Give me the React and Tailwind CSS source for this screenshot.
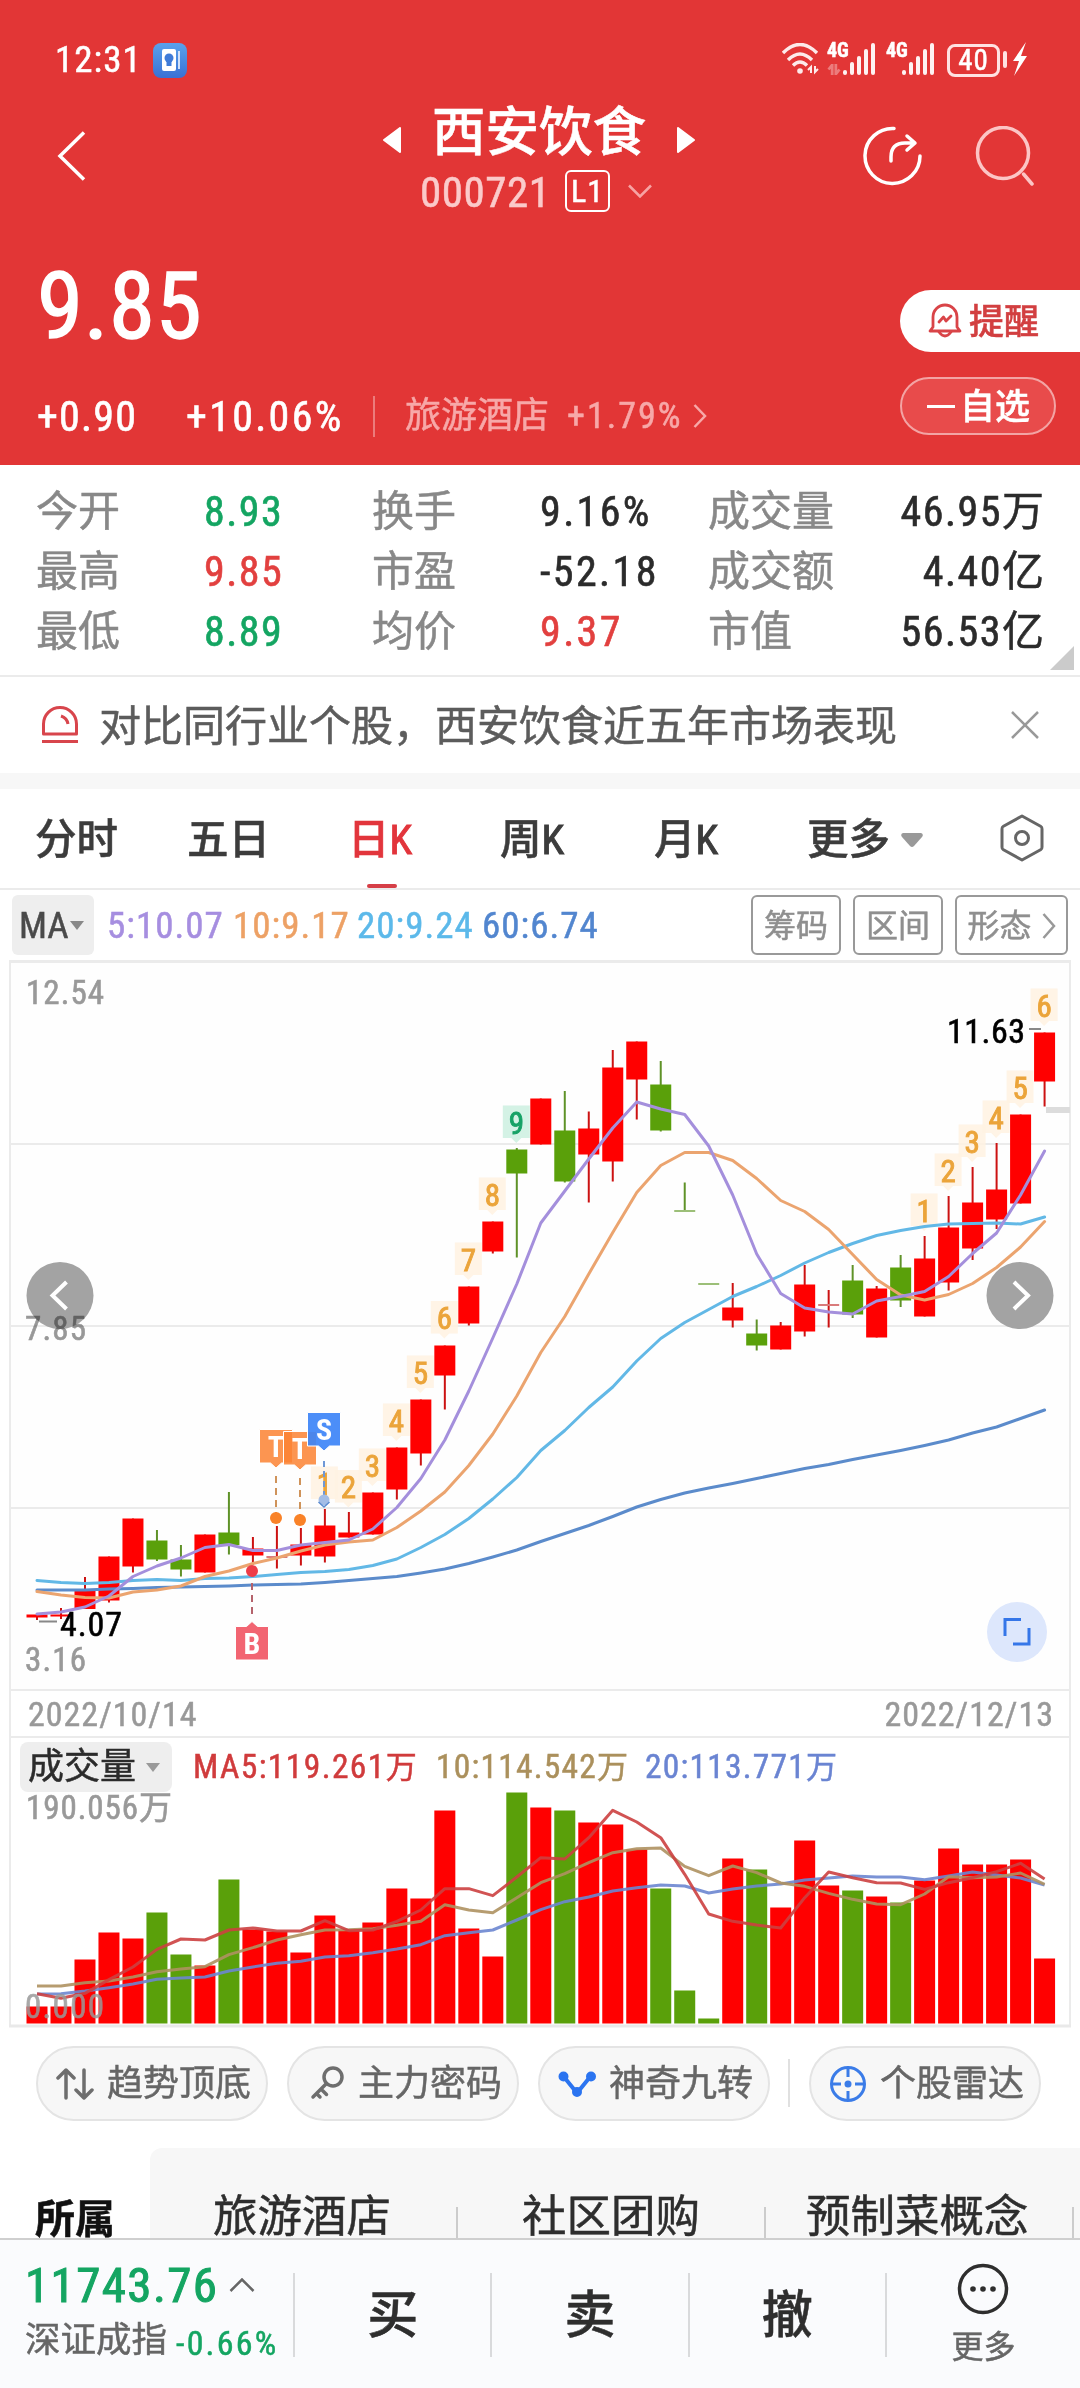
const RED = "#ff0000";
const GREEN = "#5aa00a";
const FIRST_X = 37;
const STEP = 23.99;

const cx = (i) => FIRST_X + i * STEP;

// [bodyTop, bodyBottom, wickTop, wickBottom, up, volumeTop]
const candles = [
  [1613.5, 1616.5, 1613, 1619, 1, 2005.5],
  [1613.5, 1615.5, 1607, 1618, 1, 2005.5],
  [1589.5, 1608, 1576, 1608, 1, 1958.5],
  [1555.5, 1599.5, 1555.5, 1601.5, 1, 1931.5],
  [1517.5, 1565.5, 1517.5, 1571.5, 1, 1937.5],
  [1539.5, 1558.5, 1529, 1560, 0, 1911.5],
  [1558.5, 1568.5, 1544, 1575.5, 0, 1953.5],
  [1533.5, 1571.5, 1533.5, 1571.5, 1, 1964.5],
  [1531.5, 1544, 1491, 1553.5, 0, 1878.5],
  [1547.5, 1554.5, 1536, 1564, 1, 1928.5],
  [1555.5, 1556.5, 1525, 1567.5, 1, 1930.5],
  [1543.5, 1554.5, 1527, 1564.5, 1, 1951.5],
  [1524.5, 1555.5, 1508, 1561.5, 1, 1914.5],
  [1531.5, 1536.5, 1511, 1536.5, 1, 1929.5],
  [1491.5, 1533.5, 1491.5, 1533.5, 1, 1921.5],
  [1446.5, 1488.5, 1446.5, 1498.5, 1, 1887.5],
  [1398.5, 1452.5, 1398.5, 1464.5, 1, 1897.5],
  [1344.5, 1374.5, 1344.5, 1408.5, 1, 1809.5],
  [1285.5, 1322.5, 1285.5, 1324.5, 1, 1927.5],
  [1220.5, 1250.5, 1220.5, 1252.5, 1, 1955.5],
  [1148.5, 1172.5, 1147, 1256.5, 0, 1791.5],
  [1097.5, 1143.5, 1097.5, 1143.5, 1, 1806.5],
  [1129.5, 1180.5, 1090, 1181.5, 0, 1809.5],
  [1127.5, 1153.5, 1110.5, 1201.5, 1, 1821.5],
  [1066.5, 1160.5, 1049, 1180.5, 1, 1823.5],
  [1040.5, 1078.5, 1040.5, 1118.5, 1, 1848.5],
  [1083.5, 1129.5, 1060, 1130.5, 0, 1887.5],
  [1209.5, 1210.5, 1181.5, 1210.5, 0, 1989.5],
  [1282.5, 1283.5, 1282.5, 1283.5, 0, 2017.5],
  [1306.5, 1319.5, 1282, 1326.5, 1, 1857.5],
  [1332.5, 1344.5, 1318.5, 1349.5, 0, 1868.5],
  [1324.5, 1348.5, 1321, 1348.5, 1, 1906.5],
  [1283.5, 1330.5, 1264, 1335.5, 1, 1839.5],
  [1303.5, 1304.5, 1289, 1326.5, 1, 1884.5],
  [1279.5, 1313.5, 1264, 1317, 0, 1889.5],
  [1287.5, 1336.5, 1285, 1336.5, 1, 1895.5],
  [1266.5, 1299.5, 1254, 1306, 0, 1901.5],
  [1257.5, 1315.5, 1235, 1315.5, 1, 1879.5],
  [1226.5, 1281.5, 1195, 1289.5, 1, 1847.5],
  [1201.5, 1247.5, 1166, 1259, 1, 1863.5],
  [1188.5, 1218.5, 1142, 1228, 1, 1863.5],
  [1113.5, 1202.5, 1113.5, 1202.5, 1, 1858.5],
  [1031.5, 1080.5, 1031.5, 1105.5, 1, 1957.5],
];

const priceLines = [
  {
    color: "#5b8bcb",
    ys: [1589, 1589, 1589, 1588, 1587.5, 1586.5, 1586, 1585.5, 1585, 1584, 1583.5, 1583, 1581.5, 1579.5, 1577.5, 1575.5, 1572, 1568, 1562.5, 1556, 1549, 1540.5, 1532.5, 1524.5, 1515.5, 1506, 1498.5, 1492, 1487, 1482.5, 1477.5, 1472.5, 1467.5, 1463.5, 1458.5, 1454, 1449.5, 1444.5, 1439, 1432, 1426, 1417.5, 1409],
  },
  {
    color: "#62b8e6",
    ys: [1579.5, 1581.5, 1582.5, 1581.5, 1579.5, 1578.5, 1579.5, 1577.5, 1577, 1575.5, 1573.5, 1571.5, 1570.5, 1568.5, 1564.5, 1558, 1546.5, 1533.5, 1517.5, 1498, 1476.5, 1449.5, 1429.5, 1406.5, 1386, 1360, 1337.5, 1321.5, 1308.5, 1295.5, 1285.5, 1274.5, 1262, 1251.5, 1242.5, 1234.5, 1229.5, 1225.5, 1223, 1222.5, 1222, 1223, 1216],
  },
  {
    color: "#eba46f",
    ys: [1590.5, 1594, 1596.5, 1597, 1591, 1589, 1585, 1575.5, 1570, 1562.5, 1557, 1550, 1544, 1541, 1539, 1526.5, 1510, 1491, 1464.5, 1433, 1395, 1351.5, 1315.5, 1273, 1231.5, 1191.5, 1164.5, 1151.5, 1151.5, 1159.5, 1177.5, 1199.5, 1210.5, 1228.5, 1253.5, 1278.5, 1294, 1299, 1293.5, 1282.5, 1266.5, 1246, 1220.5],
  },
  {
    color: "#a48fdc",
    ys: [1613, 1611, 1606, 1595, 1575.5, 1565, 1557, 1546.5, 1543.5, 1549.5, 1549.5, 1544, 1541.5, 1539, 1528, 1506.5, 1477.5, 1439, 1390, 1337, 1283, 1222, 1190, 1158, 1127, 1101, 1108, 1113.5, 1145, 1194, 1253, 1292.5, 1307, 1311, 1313, 1300, 1295.5, 1290.5, 1275.5, 1252.5, 1232, 1194, 1150],
  },
];

// offsets below the top of the volume pane
const volumeLines = [
  {
    color: "#6c86d0",
    ys: [759, 758, 750, 740, 729, 715, 711, 708, 690, 678, 667, 661, 648, 644, 635, 624, 611, 584, 575, 567, 537, 506, 482, 468, 450, 440, 432, 435, 456, 444, 435, 429, 417, 411, 405, 408, 408, 416, 405, 393, 402, 411, 432],
  },
  {
    color: "#ae9160",
    ys: [735, 735, 725, 720, 708, 692, 684, 677, 641, 620, 597, 581, 567, 566, 563, 553, 541, 491, 507, 515, 470, 425, 398, 365, 335, 323, 321, 376, 404, 375, 395, 426, 436, 457, 475, 489, 491, 459, 407, 410, 408, 396, 430],
  },
  {
    color: "#cc4040",
    ys: [758, 772, 757, 716, 678, 625, 594, 597, 567, 561, 570, 570, 539, 569, 567, 541, 507, 443, 443, 464, 408, 350, 354, 290, 208, 243, 290, 400, 519, 541, 552, 561, 470, 393, 410, 425, 426, 445, 425, 410, 392, 367, 414],
  },
].map((l) => ({ ...l, ys: l.ys.map((v) => 1740 + v / 3) }));

// [index, top, label]
const badges = [
  [12, 1465.5, "1"],
  [13, 1469, "2"],
  [14, 1447.5, "3"],
  [15, 1402.5, "4"],
  [16, 1354.5, "5"],
  [17, 1300, "6"],
  [18, 1241.5, "7"],
  [19, 1176.5, "8"],
  [20, 1104.5, "9"],
  [37, 1192.5, "1"],
  [38, 1152.5, "2"],
  [39, 1123.5, "3"],
  [40, 1099.5, "4"],
  [41, 1069.5, "5"],
  [42, 987.5, "6"],
];

const points = (ys) => ys.map((y, i) => `${cx(i)},${y}`).join(" ");

const Label = ({ x, y, w, children, fill = "#999", size = 33 }) => (
  <text x={x} y={y} fill={fill} stroke={fill} strokeWidth="0.6" fontSize={size} textLength={w}>
    {children}
  </text>
);

const Marker = ({ x, y, letter, color, up, opacity = 0.85 }) => (
  <g>
    <path
      d={
        up
          ? `M${x - 16.5} ${y}h11l5.5 -5 5.5 5h11v33.5h-33z`
          : `M${x - 16.5} ${y}h33v33.5h-11l-5.5 5 -5.5 -5h-11z`
      }
      fill={color}
      fillOpacity={opacity}
      stroke="#fff"
      strokeWidth="1"
    />
    <text x={x} y={y + 27} fill="#fff" fontSize="30" fontWeight="700" textAnchor="middle">
      {letter}
    </text>
  </g>
);

const Badge = ({ index, top, label }) => {
  const x = cx(index) - 0.5;
  const done = label === "9";
  const color = done ? "#17a266" : "#eba43a";
  return (
    <g>
      <path
        d={`M${x - 13.5} ${top}h27v32.5h-8.5l-5 5 -5 -5h-8.5z`}
        fill={done ? "#cdf0e0" : "#fff2e2"}
        fillOpacity="0.85"
      />
      <text x={x} y={top + 28} fill={color} stroke={color} strokeWidth="0.9" fontSize="31" textAnchor="middle">
        {label}
      </text>
    </g>
  );
};

const PriceChart = () => (
  <svg viewBox="0 959 1080 729" className="block h-[729px] w-[1080px]">
    <rect x="10" y="961" width="1060" height="740" fill="#fefefe" stroke="#ebebeb" strokeWidth="2" />
    <path d="M9 960.5H1071" stroke="#ebebeb" strokeWidth="3" />
    <path d="M10 1143H1070M10 1325H1070M10 1507H1070" stroke="#ebebeb" strokeWidth="2" />

    {candles.map(([top, bottom, high, low, up], i) => {
      const flat = bottom - top < 2;
      return (
        <g key={i}>
          <path d={`M${cx(i)} ${high}V${low}`} stroke={up ? "#cc1212" : "#5f9228"} strokeWidth="2" />
          <rect
            x={cx(i) - 10.5}
            y={top - (flat ? 0.5 : 0)}
            width="21"
            height={flat ? 2 : bottom - top}
            fill={flat ? (up ? "#d97b7b" : "#9cbf78") : up ? RED : GREEN}
          />
        </g>
      );
    })}
    <rect x="1046" y="1106" width="24" height="6" fill="#dcdcdc" />

    {badges.map(([index, top, label]) => (
      <Badge key={index} index={index} top={top} label={label} />
    ))}
    {priceLines.map((l) => (
      <polyline key={l.color} points={points(l.ys)} fill="none" stroke={l.color} strokeWidth="3" strokeLinejoin="round" strokeLinecap="round" />
    ))}

    <path d="M276 1475V1512M300 1477V1514" stroke="#cf935a" strokeWidth="2" strokeDasharray="7 5" />
    <path d="M324 1460V1496" stroke="#6f98d6" strokeWidth="2" strokeDasharray="6 4" />
    <path d="M252 1582V1618" stroke="#b5636c" strokeWidth="2" strokeDasharray="7 5" />
    <circle cx="276" cy="1517" r="6" fill="#f98228" />
    <circle cx="300" cy="1519" r="6" fill="#f98228" />
    <circle cx="252" cy="1570" r="6" fill="#ee3c48" />
    <circle cx="324" cy="1499" r="5.5" fill="#a3bde6" />
    <path d="M318.5 1501l5.5 5 5.5 -5" fill="none" stroke="#5c8cd0" strokeWidth="1.5" />
    <Marker x={276} y={1428.5} letter="T" color="#fb8232" />
    <Marker x={300} y={1430.5} letter="T" color="#fb8232" />
    <Marker x={324} y={1411.5} letter="S" color="#3d84f7" opacity={0.92} />
    <Marker x={252} y={1625.5} letter="B" color="#f04a59" up />

    <path d="M39 1620.5H57M1029 1028H1041" stroke="#888" strokeWidth="2" />
    <Label x={60} y={1635} w={62} fill="#000" size={34}>4.07</Label>
    <Label x={947} y={1041.5} w={78} fill="#000" size={34}>11.63</Label>

    <circle cx="60" cy="1294.5" r="33.5" fill="#a3a3a3" />
    <circle cx="1020" cy="1294.5" r="33.5" fill="#a3a3a3" />
    <path d="M66.5 1281L52.5 1294.5L66.5 1308M1014 1281L1028 1294.5L1014 1308" fill="none" stroke="#fff" strokeWidth="4" />

    <Label x={26} y={1003} w={78}>12.54</Label>
    <g className="mix-blend-multiply">
      <Label x={25} y={1339} w={61} fill="#999">7.85</Label>
    </g>
    <Label x={25} y={1670} w={61}>3.16</Label>

    <circle cx="1017" cy="1631" r="30" fill="#dde7fc" />
    <path d="M1021 1618.5H1005V1635M1029 1627V1643H1013" fill="none" stroke="#3576e8" strokeWidth="3" />
  </svg>
);

const VolumeChart = () => (
  <svg viewBox="0 1791 1080 236" className="block h-[236px] w-[1080px] overflow-visible">
    <path d="M10 1791V2024M1070 1791V2024" stroke="#ebebeb" strokeWidth="2" />
    <path d="M9 2025H1071" stroke="#e9e9e9" strokeWidth="3" />
    {candles.map(([, , , , up, top], i) => (
      <rect key={i} x={cx(i) - 10.5} y={top} width="21" height={2022.5 - top} fill={up ? RED : GREEN} />
    ))}
    {volumeLines.map((l) => (
      <polyline key={l.color} points={points(l.ys)} fill="none" stroke={l.color} strokeOpacity="0.9" strokeWidth="3" strokeLinejoin="round" />
    ))}
    <Label x={26} y={1818} w={146}>190.056万</Label>
    <g opacity="0.85">
      <Label x={25} y={2017} w={79}>0.000</Label>
    </g>
  </svg>
);

const Signal = () => (
  <div className="flex h-[32px] items-end gap-[3px]">
    <i className="h-[5px] w-1 rounded-full bg-red-50" />
    <i className="h-[13px] w-1 rounded-full bg-red-50" />
    <i className="h-[19px] w-1 rounded-full bg-red-50" />
    <i className="h-[26px] w-1 rounded-full bg-red-50" />
    <i className="h-[32px] w-1 rounded-full bg-red-50" />
  </div>
);

const StatusBar = () => (
  <div className="flex h-[118px] items-center">
    <span className="mt-[2px] ml-[55px] w-[98px] text-[37px] tracking-[1px]">12:31</span>
    <div className="mt-[2px] flex h-[35px] w-[34px] items-center justify-center rounded-lg bg-gradient-to-b from-[#5aa2ec] to-[#3a70d4]">
      <svg viewBox="0 0 24 24" className="h-6 w-6">
        <rect x="4" y="1" width="14" height="22" rx="2" fill="#fff" />
        <path d="M21 3v18" stroke="#cfe0fa" strokeWidth="2" />
        <circle cx="11" cy="10" r="4.5" fill="#3f7bd8" />
        <path d="M8.5 13h5v5h-5z" fill="#3f7bd8" />
      </svg>
    </div>
    <svg viewBox="0 0 38 32" className="ml-[595px] h-[32px] w-[38px]" fill="none" stroke="#fdeaea" strokeWidth="3.4">
      <path d="M1 10Q18 -7 35 10M6 17Q18 5 30 17M11 22.5Q18 15.500 25 22.5" />
      <circle cx="18" cy="28" r="2.800" fill="#fdeaea" stroke="none" />
      <path d="M29 30v-6l-3 3M33 23v6l3 -3" strokeWidth="2" />
    </svg>
    <div className="ml-[7px] flex h-[32px]">
      <div className="flex flex-col justify-between">
        <span className="w-[18px] text-[20px] leading-[15px] font-bold">4G</span>
        <svg viewBox="0 0 14 12" className="h-[11px] w-[14px] opacity-35" fill="none" stroke="#fff" strokeWidth="3">
          <path d="M5 12V1L1 6M9 0v11l4 -5" />
        </svg>
      </div>
      <div className="-ml-0.5"><Signal /></div>
    </div>
    <div className="ml-[11px] flex h-[32px]">
      <span className="w-[16px] text-[20px] leading-[15px] font-bold">4G</span>
      <Signal />
    </div>
    <div className="mt-[2px] ml-[13px] flex h-[33px] w-[53px] items-center justify-center rounded-[8px] border-[3px] border-red-100 text-[29px] leading-none tracking-[1px]">
      40
    </div>
    <i className="ml-[3px] h-[17px] w-1 rounded-full bg-red-100" />
    <svg viewBox="0 0 14 34" className="ml-[6px] h-[34px] w-[14px]" fill="#fff">
      <path d="M13 0L0 19h6L1 34L14 14H8z" />
    </svg>
  </div>
);

const TitleBar = () => (
  <div className="flex h-[142px] items-start">
    <svg viewBox="0 0 30 50" className="mt-[13px] ml-[57px] h-[50px] w-[30px]" fill="none" stroke="#fff" strokeWidth="3.5">
      <path d="M27 1.5L3 25L27 48.5" />
    </svg>
    <div className="ml-[296px] flex w-[312px] flex-col items-center">
      <div className="-mt-[12px] flex h-[54px] w-full items-center justify-between">
        <svg viewBox="0 0 18 26" className="mt-[14px] h-[26px] w-[18px]"><path d="M17 1v24L1 13z" fill="#fff" stroke="#fff" strokeLinejoin="round" strokeWidth="2" /></svg>
        <span className="text-[53.5px] leading-none font-medium">西安饮食</span>
        <svg viewBox="0 0 18 26" className="mt-[14px] h-[26px] w-[18px]"><path d="M1 1v24L17 13z" fill="#fff" stroke="#fff" strokeLinejoin="round" strokeWidth="2" /></svg>
      </div>
      <div className="mt-[10px] flex h-[42px] w-full items-center pl-[37px]">
        <span className="mt-[3px] w-[145px] text-[43px] leading-none tracking-[0.5px] text-[#fbcaca]">000721</span>
        <span className="flex h-[42px] w-[45px] items-center justify-center rounded-md border-2 border-white text-[32px] leading-none tracking-[1px]">L1</span>
        <svg viewBox="0 0 24 14" className="ml-[18px] h-[14px] w-6" fill="none" stroke="#f7a3a3" strokeWidth="2.5">
          <path d="M1 1.5L12 12.5L23 1.5" />
        </svg>
      </div>
    </div>
    <svg viewBox="0 0 60 60" className="ml-[168px] mt-[8px] h-[60px] w-[60px]" fill="none" stroke="#fff" strokeWidth="3.5" strokeLinecap="round" strokeLinejoin="round">
      <path d="M31 2.5A27.5 27.5 0 1 0 57 30" />
      <path d="M28 35V31Q28 17 42 17H51M44 10L52 17L44 24" />
    </svg>
    <svg viewBox="0 0 60 60" className="ml-[52px] mt-[8px] h-[60px] w-[60px]" fill="none" stroke="#fcc5c5" strokeWidth="3.5" strokeLinecap="round">
      <circle cx="28" cy="27" r="25.5" />
      <path d="M48.5 48L57 58" />
    </svg>
  </div>
);

const Quote = () => (
  <div className="flex h-[205px] justify-between">
    <div className="flex flex-col">
      <span className="ml-[37px] text-[93px] leading-none tracking-[0.8px] [-webkit-text-stroke:1.5px_white]">9.85</span>
      <div className="mt-[42px] flex h-[42px] items-center">
        <span className="mt-[2px] w-[149px] ml-[37px] text-[42px] leading-none tracking-[1.2px] [-webkit-text-stroke:0.6px_white]">+0.90</span>
        <span className="mt-[2px] w-[187px] text-[42px] leading-none tracking-[2.3px] [-webkit-text-stroke:0.6px_white]">+10.06%</span>
        <i className="h-[41px] w-[2px] bg-white/35" />
        <span className="ml-[30px] w-[162px] text-[36px] leading-none text-[#f7a8a8]">旅游酒店</span>
        <span className="w-[126px] text-[36px] leading-none tracking-[2px] text-[#f7a8a8]">+1.79%</span>
        <svg viewBox="0 0 14 24" className="h-6 w-[14px]" fill="none" stroke="#f7a8a8" strokeWidth="2.5">
          <path d="M1.5 1L12 12L1.5 23" />
        </svg>
      </div>
    </div>
    <div className="mt-[30px] flex flex-col items-end">
      <button className="flex h-[62px] w-[180px] items-center rounded-l-full bg-white pl-[28px] text-[35px] leading-none text-[#d23f40]">
        <svg viewBox="0 0 34 36" className="mr-[7px] h-[36px] w-[34px]" fill="none" stroke="#d94448" strokeWidth="2.8" strokeLinejoin="round" strokeLinecap="round">
          <path d="M5 24V14A12 12 0 0 1 29 14V24L32 28H2z" />
          <path d="M11 29Q17 37 23 29M11 19L15.5 14L18 18L23 13" />
        </svg>
        <span className="mt-[3px] font-medium">提醒</span>
      </button>
      <button className="mt-[25px] mr-6 flex h-[58px] w-[156px] items-center rounded-full border-2 border-[#f3a4a4] bg-[#e84b4b] pl-[25px] text-[35px] leading-none">
        <i className="mr-[5px] h-[3px] w-[28px] bg-white" />
        <span className="mt-[2px] font-medium">自选</span>
      </button>
    </div>
  </div>
);

const stats = [
  ["今开", "8.93", "text-[#14a562]", "换手", "9.16%", "text-[#2b2b2b]", "成交量", "46.95万"],
  ["最高", "9.85", "text-[#e2403f]", "市盈", "-52.18", "text-[#2b2b2b]", "成交额", "4.40亿"],
  ["最低", "8.89", "text-[#14a562]", "均价", "9.37", "text-[#e2403f]", "市值", "56.53亿"],
];

const Stats = () => (
  <div className="relative h-[212px] border-b-2 border-[#ebebeb] pt-[17px] text-[42px] leading-none text-[#888]">
    {stats.map(([a, av, ac, b, bv, bc, c, cv]) => (
      <div key={a} className="flex h-[60px] items-center pr-[36px] pl-[36px]">
        <span className="w-[168px]">{a}</span>
        <span className={`w-[168px] tracking-[1.5px] [-webkit-text-stroke:0.6px] ${ac}`}>{av}</span>
        <span className="w-[168px]">{b}</span>
        <span className={`w-[168px] tracking-[2.4px] [-webkit-text-stroke:0.6px] ${bc}`}>{bv}</span>
        <span>{c}</span>
        <span className="ml-auto flex items-center text-[#2b2b2b]">
          <span className="tracking-[1.5px] [-webkit-text-stroke:0.6px]">{cv.slice(0, -1)}</span>
          <span>{cv.slice(-1)}</span>
        </span>
      </div>
    ))}
    <svg viewBox="0 0 24 24" className="absolute right-[6px] bottom-[5px] h-6 w-6"><path d="M24 0V24H0z" fill="#cbcbcb" /></svg>
  </div>
);

const Notice = () => (
  <div className="flex h-[112px] items-center border-b-[16px] border-[#f7f7f7] pl-[41px] text-[42px] leading-none text-[#5c5c5c]">
    <svg viewBox="0 0 38 38" className="h-[38px] w-[38px]" fill="none" stroke="#d8454c" strokeWidth="3">
      <path d="M2.5 28V18A16.5 16.5 0 0 1 35.5 18V28z" strokeLinejoin="round" />
      <path d="M1 35.5H37M20 10Q26 12 27 18" />
    </svg>
    <span className="mt-[4px] ml-[20px]">对比同行业个股，西安饮食近五年市场表现</span>
    <svg viewBox="0 0 28 28" className="ml-[114px] h-7 w-7" stroke="#999" strokeWidth="2.5">
      <path d="M1 1L27 27M27 1L1 27" />
    </svg>
  </div>
);

const Tabs = () => (
  <div className="flex h-[101px] items-center border-b-2 border-[#ebebeb] pt-[2px] text-[41.5px] leading-none text-[#3c3c3c]">
    <span className="ml-[35px] w-[152px] font-medium">分时</span>
    <span className="w-[161px] font-medium">五日</span>
    <span className="relative flex h-full w-[68px] items-center text-[#e2353c]">
      <span className="font-medium">日</span><span className="[-webkit-text-stroke:1px]">K</span>
      <i className="absolute bottom-0 left-[19px] h-1 w-[30px] rounded-sm bg-[#d63f47]" />
    </span>
    <span className="ml-[84px] flex w-[154px]"><span className="font-medium">周</span><span className="[-webkit-text-stroke:1px]">K</span></span>
    <span className="flex w-[153px]"><span className="font-medium">月</span><span className="[-webkit-text-stroke:1px]">K</span></span>
    <span className="w-[94px] font-medium">更多</span>
    <svg viewBox="0 0 22 14" className="h-[14px] w-[22px]"><path d="M2 0H20Q23 1 21 4L13 13Q11 15 9 13L1 4Q-1 1 2 0z" fill="#999" /></svg>
    <svg viewBox="0 0 46 48" className="-mt-[4px] ml-[76px] h-[48px] w-[46px]" fill="none" stroke="#666" strokeWidth="3">
      <path d="M23 2L42 12.5Q43 13 43 15V33Q43 35 42 35.5L23 46L4 35.5Q3 35 3 33V15Q3 13 4 12.5z" strokeLinejoin="round" />
      <circle cx="23" cy="24" r="6.5" />
    </svg>
  </div>
);

const MaRow = () => (
  <div className="flex h-[70px] items-center pl-[12px] text-[37px] leading-none tracking-[1px]">
    <span className="flex h-[60px] w-[82px] items-center rounded-md bg-[#eee] pl-[7px] tracking-normal text-[#4a4a4a]">
      MA
      <svg viewBox="0 0 14 9" className="ml-[1px] h-[9px] w-[14px]"><path d="M0 0H14L7 9z" fill="#888" /></svg>
    </span>
    <span className="ml-[13px] w-[126px] text-[#a68ee0]">5:10.07</span>
    <span className="w-[124px] text-[#eda165]">10:9.17</span>
    <span className="w-[125px] text-[#5cb9ea]">20:9.24</span>
    <span className="w-[269px] text-[#5286cf]">60:6.74</span>
    <div className="flex gap-[12px] text-[32px] tracking-normal text-[#8f8f8f]">
      <span className="flex h-[60px] w-[90px] items-center justify-center rounded-md border-2 border-[#999] pt-[2px]">筹码</span>
      <span className="flex h-[60px] w-[90px] items-center justify-center rounded-md border-2 border-[#999] pt-[2px]">区间</span>
      <span className="flex h-[60px] w-[113px] items-center justify-center gap-[10px] rounded-md border-2 border-[#999] pt-[2px]">
        形态
        <svg viewBox="0 0 14 26" className="h-[26px] w-[14px]" fill="none" stroke="#999" strokeWidth="2.5">
          <path d="M1.5 1L12 13L1.5 25" />
        </svg>
      </span>
    </div>
  </div>
);

const DateRow = () => (
  <div className="mx-[9px] flex h-[49px] items-center justify-between border-2 border-[#ebebeb] pr-[15px] pl-[17px] text-[34px] leading-none tracking-[1px] text-[#999]">
    <span>2022/10/14</span>
    <span>2022/12/13</span>
  </div>
);

const VolumeHeader = () => (
  <div className="mx-[9px] flex h-[54px] items-center border-x-2 border-[#ebebeb] pt-1 pl-[9px] text-[33.5px] leading-none tracking-[1.4px]">
    <span className="flex h-[50px] w-[152px] items-center rounded-lg bg-[#eee] pl-[8px] text-[36px] tracking-normal text-[#2b2b2b]">
      成交量
      <svg viewBox="0 0 14 9" className="ml-[10px] h-[9px] w-[14px]"><path d="M0 0H14L7 9z" fill="#999" /></svg>
    </span>
    <span className="ml-[21px] w-[243px] whitespace-nowrap text-[#d03b3c]">MA5:119.261<span className="text-[31px] tracking-normal">万</span></span>
    <span className="w-[209px] whitespace-nowrap tracking-[1.2px] text-[#ab905c]">10:114.542<span className="text-[31px] tracking-normal">万</span></span>
    <span className="whitespace-nowrap tracking-[1.2px] text-[#6a84d2]">20:113.771<span className="text-[31px] tracking-normal">万</span></span>
  </div>
);

const Chip = ({ icon, children }) => (
  <span className="flex h-[75px] w-[232px] items-center rounded-full border-2 border-[#e4e4e4] bg-[#f7f7f7] pl-[18px] text-[36px] leading-none text-[#666]">
    <span className="mr-[13px] shrink-0">{icon}</span>
    <span className="whitespace-nowrap">{children}</span>
  </span>
);

const Chips = () => (
  <div className="flex h-[120px] items-start pt-[18px] pl-[36px]">
    <Chip
      icon={
        <svg viewBox="0 0 38 38" className="h-[38px] w-[38px]" fill="none" stroke="#6e6e6e" strokeWidth="3.5" strokeLinecap="round" strokeLinejoin="round">
          <path d="M10 33V5M2 13L10 5L18 13M28 5V33M20 25L28 33L36 25" />
        </svg>
      }
    >
      趋势顶底
    </Chip>
    <i className="w-[19px]" />
    <Chip
      icon={
        <svg viewBox="0 0 38 38" className="h-[38px] w-[38px]" fill="none" stroke="#6e6e6e" strokeWidth="3.5" strokeLinecap="round">
          <circle cx="26" cy="12" r="9" />
          <path d="M19.5 18.5L6 32M9.5 28.5L13 32M14 24L19.5 29.5" />
        </svg>
      }
    >
      主力密码
    </Chip>
    <i className="w-[19px]" />
    <Chip
      icon={
        <svg viewBox="0 0 38 38" className="h-[38px] w-[38px]" fill="#2b74f0" stroke="#2b74f0" strokeWidth="4">
          <path d="M6 12L19 28L32 12" fill="none" />
          <circle cx="5.5" cy="11.5" r="3" />
          <circle cx="19" cy="27" r="3" />
          <circle cx="33" cy="11.5" r="3" />
        </svg>
      }
    >
      神奇九转
    </Chip>
    <i className="mt-[13px] mr-[19px] ml-[18px] h-[48px] w-[2px] bg-[#e0e0e0]" />
    <Chip
      icon={
        <svg viewBox="0 0 38 38" className="h-[38px] w-[38px]" fill="none" stroke="#3b7ce8" strokeWidth="3">
          <circle cx="19" cy="19" r="16.5" />
          <circle cx="19" cy="19" r="3.5" fill="#3b7ce8" stroke="none" />
          <path d="M19 2V12M19 26V36M2 19H12M26 19H36" />
        </svg>
      }
    >
      个股雷达
    </Chip>
  </div>
);

const Sectors = () => (
  <div className="flex h-[90px] overflow-hidden">
    <span className="mt-[52px] w-[150px] pl-[35px] text-[40px] leading-none font-bold text-[#111]">所属</span>
    <div className="flex flex-1 items-start rounded-tl-xl bg-[#f7f7f7] pt-[47px] text-[44.5px] leading-none text-[#2e2e2e]">
      <span className="ml-[63px] w-[243px] whitespace-nowrap">旅游酒店</span>
      <i className="mt-3 h-12 w-[2px] bg-[#ccc]" />
      <span className="ml-[64px] w-[242px] whitespace-nowrap">社区团购</span>
      <i className="mt-3 h-12 w-[2px] bg-[#ccc]" />
      <span className="ml-[40px] w-[266px] whitespace-nowrap">预制菜概念</span>
      <i className="mt-3 h-12 w-[2px] bg-[#ccc]" />
    </div>
  </div>
);

const Divider = () => <i className="h-[84px] w-[2px] bg-[#d9dadc]" />;

const BottomBar = () => (
  <div className="flex h-[151px] items-center border-t-2 border-[#cfcfcf] bg-[#fafbfd] leading-none text-[#2e2e2e]">
    <div className="-mt-[10px] flex w-[293px] flex-col pl-[25px]">
      <div className="flex h-[50px] items-center text-[#14a562]">
        <span className="w-[204px] text-[49px] tracking-[1.4px] [-webkit-text-stroke:1px]">11743.76</span>
        <svg viewBox="0 0 26 14" className="h-[14px] w-[26px]" fill="none" stroke="#666" strokeWidth="2.5">
          <path d="M1.5 13L13 1.5L24.5 13" />
        </svg>
      </div>
      <div className="mt-[13px] flex h-[36px] items-center">
        <span className="w-[151px] text-[35.5px] whitespace-nowrap text-[#666]">深证成指</span>
        <span className="mt-1 text-[34px] tracking-[2.2px] text-[#14a562]">-0.66%</span>
      </div>
    </div>
    <Divider />
    <span className="mt-[2px] flex-1 text-center text-[51px] font-medium">买</span>
    <Divider />
    <span className="mt-[2px] flex-1 text-center text-[51px] font-medium">卖</span>
    <Divider />
    <span className="mt-[2px] flex-1 text-center text-[51px] font-medium">撤</span>
    <Divider />
    <div className="-mt-[4px] flex w-[193px] flex-col items-center text-[32px] text-[#666]">
      <svg viewBox="0 0 52 52" className="h-[52px] w-[52px]" fill="none" stroke="#2e2e2e" strokeWidth="3.5">
        <circle cx="26" cy="26" r="23.5" />
        <g fill="#2e2e2e" stroke="none">
          <circle cx="16" cy="26" r="2.8" />
          <circle cx="26" cy="26" r="2.8" />
          <circle cx="36" cy="26" r="2.8" />
        </g>
      </svg>
      <span className="mt-[16px]">更多</span>
    </div>
  </div>
);

export default function App() {
  return (
    <div className="h-[2388px] w-[1080px] overflow-hidden bg-white font-['Roboto_Condensed','Noto_Sans_CJK_SC',sans-serif] [-webkit-text-stroke:0.5px]">
      <header className="h-[465px] bg-[#e23636] text-white">
        <StatusBar />
        <TitleBar />
        <Quote />
      </header>
      <Stats />
      <Notice />
      <Tabs />
      <MaRow />
      <PriceChart />
      <DateRow />
      <VolumeHeader />
      <VolumeChart />
      <Chips />
      <Sectors />
      <BottomBar />
    </div>
  );
}
